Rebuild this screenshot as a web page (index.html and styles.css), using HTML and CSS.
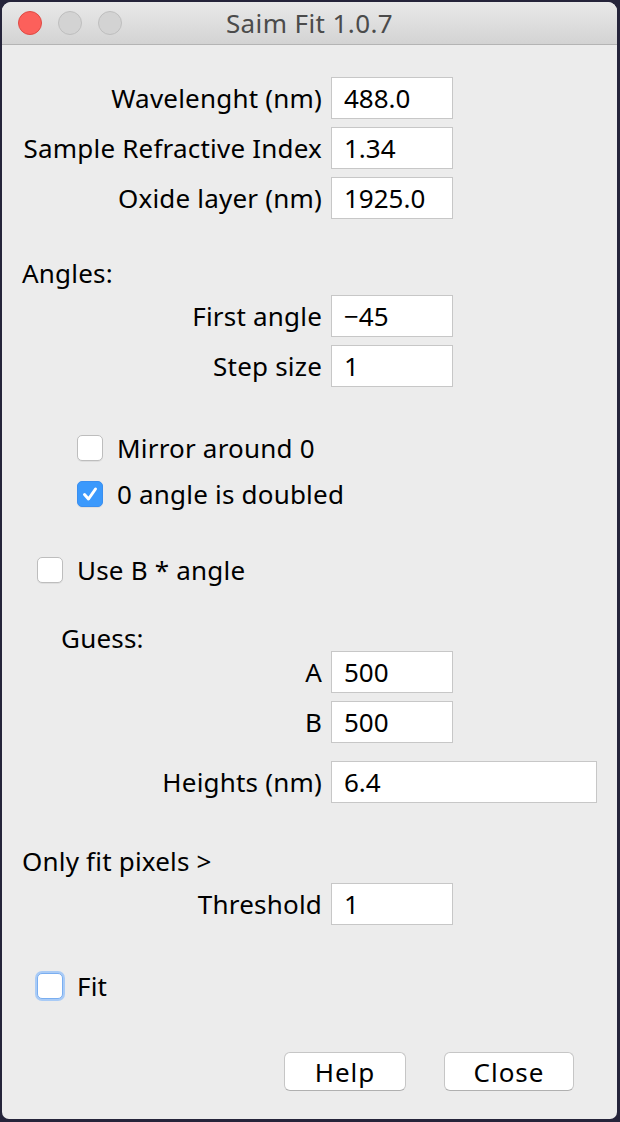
FILE: index.html
```html
<!DOCTYPE html>
<html lang="en">
  <head>
    <meta charset="utf-8">
    <title>Saim Fit 1.0.7</title>
    <link rel="stylesheet" href="styles.css">
  </head>
  <body>
    <div class="window">
      <div class="titlebar">
        <div class="lights">
          <span class="light red"></span>
          <span class="light"></span>
          <span class="light"></span>
        </div>
        <div class="title">Saim Fit 1.0.7</div>
        <div></div>
      </div>

      <div class="content">
        <div class="row top">
          <label>Wavelenght (nm)</label>
          <input type="text" value="488.0">
        </div>
        <div class="row">
          <label>Sample Refractive Index</label>
          <input type="text" value="1.34">
        </div>
        <div class="row">
          <label>Oxide layer (nm)</label>
          <input type="text" value="1925.0">
        </div>

        <div class="heading angles">Angles:</div>
        <div class="row after-heading">
          <label>First angle</label>
          <input type="text" value="&minus;45">
        </div>
        <div class="row">
          <label>Step size</label>
          <input type="text" value="1">
        </div>

        <div class="check indent mirror">
          <span class="box"></span>
          <span>Mirror around 0</span>
        </div>
        <div class="check indent doubled">
          <span class="box checked">
            <svg width="26" height="26" viewBox="0 0 26 26"><polyline points="7.5,13.5 11.5,18 18.5,8" fill="none" stroke="#fff" stroke-width="3" stroke-linecap="round" stroke-linejoin="round"/></svg>
          </span>
          <span>0 angle is doubled</span>
        </div>

        <div class="check use-b">
          <span class="box"></span>
          <span>Use B * angle</span>
        </div>

        <div class="heading guess">Guess:</div>
        <div class="row top">
          <label>A</label>
          <input type="text" value="500">
        </div>
        <div class="row">
          <label>B</label>
          <input type="text" value="500">
        </div>
        <div class="row heights">
          <label>Heights (nm)</label>
          <input type="text" class="wide" value="6.4">
        </div>

        <div class="heading only">Only fit pixels &gt;</div>
        <div class="row after-heading">
          <label>Threshold</label>
          <input type="text" value="1">
        </div>

        <div class="check fit">
          <span class="box focus"></span>
          <span>Fit</span>
        </div>

        <div class="buttons">
          <button class="help">Help</button>
          <button class="close">Close</button>
        </div>
      </div>
    </div>
  </body>
</html>
```

FILE: styles.css
```css
* {
  box-sizing: border-box;
}

body {
  margin: 0;
  padding: 2px;
  background: #25243a;
  font-family: "Noto Sans", "DejaVu Sans", sans-serif;
  font-size: 26px;
  letter-spacing: 0.2px;
  color: #000;
}

/* the dialog itself */
.window {
  width: 615px;
  height: 1117px;
  background: #ececec;
  border-radius: 9px 9px 7px 7px;
  overflow: hidden;
}

.titlebar {
  display: grid;
  grid-template-columns: 1fr auto 1fr;
  align-items: center;
  height: 43px;
  background: linear-gradient(#e9e9e9, #d3d3d3);
  border-bottom: 1px solid #b4b4b4;
}

.lights {
  display: flex;
  gap: 16px;
  padding-left: 16px;
}

.light {
  width: 24px;
  height: 24px;
  border-radius: 50%;
  background: #d3d3d3;
  border: 1px solid #bebebe;
}

.light.red {
  background: #fc605b;
  border-color: #de4a44;
}

.title {
  color: #4b4b4b;
  line-height: 30px;
  letter-spacing: 0.4px;
}

.content {
  padding-top: 32px;
}

/* label + text field rows */
.row {
  display: flex;
  align-items: center;
  height: 42px;
  margin-top: 8px;
}

.row.top {
  margin-top: 0;
}

.row label {
  width: 329px;
  padding-right: 9px;
  text-align: right;
  white-space: nowrap;
}

.row input {
  width: 122px;
  height: 42px;
  padding: 0 12px;
  border: 1px solid #c7c7c7;
  background: #fff;
  font: inherit;
  color: #000;
  outline: none;
}

.row input.wide {
  width: 266px;
}

.row.after-heading {
  margin-top: 9px;
}

.row.heights {
  margin-top: 18px;
}

.heading {
  line-height: 26px;
  height: 26px;
}

.angles {
  margin-top: 41px;
  padding-left: 20px;
}

.guess {
  margin-top: 41px;
  padding-left: 59px;
}

.only {
  margin-top: 45px;
  padding-left: 20px;
}

/* checkboxes */
.check {
  display: flex;
  align-items: center;
  gap: 14px;
  height: 28px;
}

.check.indent {
  padding-left: 75px;
}

.mirror {
  margin-top: 47px;
}

.doubled {
  margin-top: 18px;
}

.use-b {
  margin-top: 48px;
  padding-left: 35px;
}

.fit {
  margin-top: 47px;
  padding-left: 35px;
}

.box {
  width: 26px;
  height: 26px;
  border-radius: 5px;
  background: #fff;
  border: 1px solid #bdbdbd;
  box-shadow: 0 1px 0 rgba(0, 0, 0, 0.06);
}

.box.checked {
  background: #3b99fc;
  border-color: #3a8ff0;
}

.box svg {
  display: block;
  margin: -1px;
}

.box.focus {
  border-color: #7aaef0;
  box-shadow: 0 0 0 2px #a9cbf6;
}

/* bottom buttons */
.buttons {
  display: flex;
  gap: 38px;
  margin-top: 52px;
  padding-left: 282px;
}

.buttons button {
  height: 39px;
  background: #fff;
  border: 1px solid #c6c6c6;
  border-bottom-color: #b0b0b0;
  border-radius: 6px;
  font: inherit;
  color: #000;
  letter-spacing: 1px;
  padding: 0;
}

.help {
  width: 122px;
}

.close {
  width: 130px;
}
```
